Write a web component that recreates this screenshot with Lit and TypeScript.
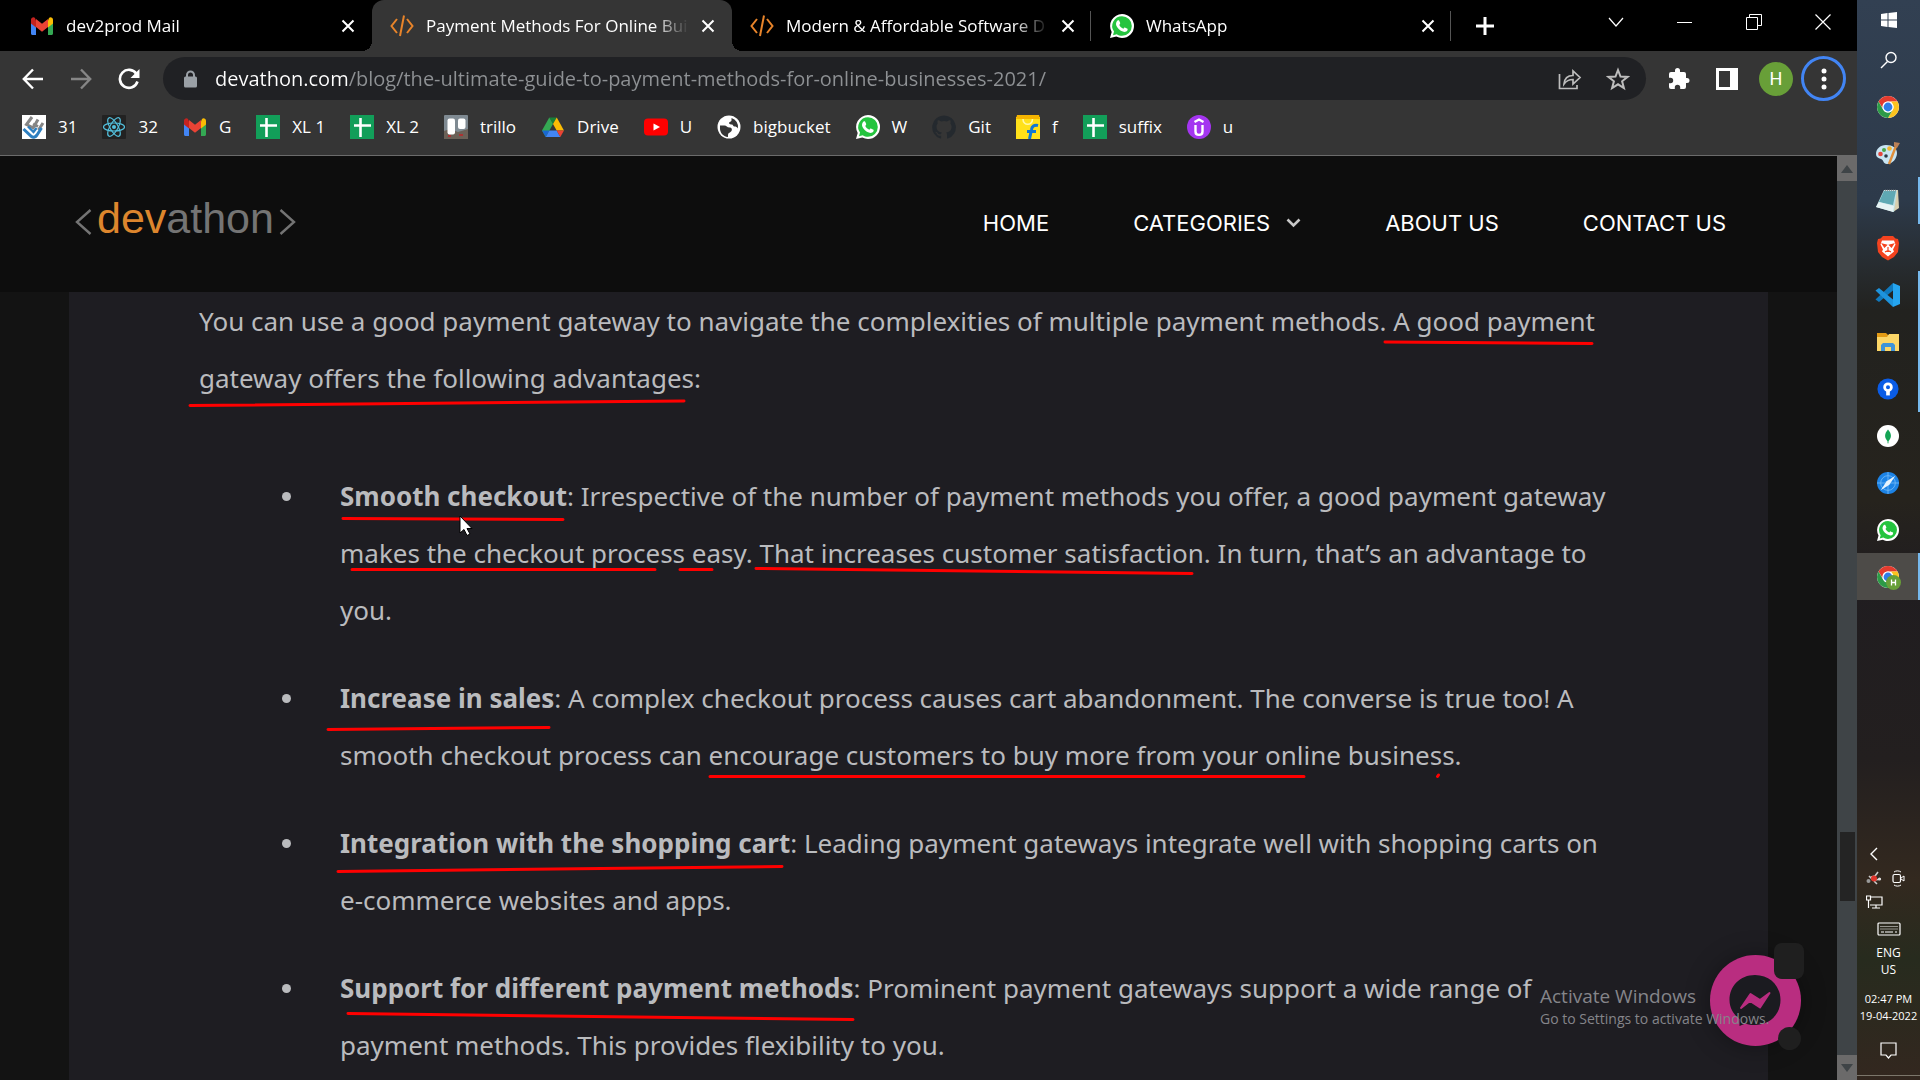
import { LitElement, html, css, svg, nothing } from "lit";
import { customElement } from "lit/decorators.js";
import { classMap } from "lit/directives/class-map.js";

const icon = (w: number, h: number, box: string, body: unknown) =>
  html`<svg width=${w} height=${h} viewBox=${box} fill="none" aria-hidden="true">${body}</svg>`;

const gmail = () =>
  icon(24, 24, "0 0 24 24", svg`
    <path d="M1 5v14.5c0 .8.6 1.5 1.500 1.500H6V11z" fill="#4285f4"/>
    <path d="M23 5v14.500c0 .8-.6 1.500-1.500 1.500H18V11z" fill="#34a853"/>
    <path d="M6 6.500v7L1 9.500V5.800C1 3.500 3.600 2.500 5 3.900z" fill="#c5221f"/>
    <path d="M18 6.500v7l5-4V5.800c0-2.300-2.600-3.300-4-1.900z" fill="#fbbc04"/>
    <path d="M6 5l6 4.800L18 5v8l-6 4.700L6 13z" fill="#ea4335"/>`);

const code = () =>
  icon(24, 24, "0 0 24 24", svg`
    <path d="M7 5L1.500 12 7 19M17 5l5.500 7L17 19M14 1.500L10 22" stroke="#e8842a" stroke-width="2"/>`);

const whatsapp = (size: number) =>
  icon(size, size, "0 0 24 24", svg`
    <path d="M12 0a12 12 0 0 1 0 24c-2 0-4-.5-5.700-1.400L0 24l1.700-6A12 12 0 0 1 12 0z" fill="#fff"/>
    <path d="M12 2.200a9.800 9.800 0 0 1 0 19.600c-2 0-3.700-.5-5.200-1.500L3 21.300l1-3.700A9.800 9.800 0 0 1 12 2.200z" fill="#25c43f"/>
    <path d="M8.200 6.200c.5 0 .8 0 1 .6l1 2.300c.1.500-.1.800-.9 1.800.8 1.700 2.200 3 4.100 3.800.7-.7 1-1.300 1.400-1.200.4.100 2 .9 2.700 1.300.3.300.1 1.400-.3 2-.8 1-2.300 1.400-3.700 1-3.800-1.100-6.600-4-7.400-6.800-.4-1.800.6-4.500 2.100-4.800z" fill="#fff"/>`);

const sheet = () =>
  icon(24, 24, "0 0 24 24", svg`
    <path d="M0 0h24v24H0z" fill="#129e59"/>
    <path d="M10.500 3v19M4 10.500h17" stroke="#fff" stroke-width="2.600"/>`);

const letterMark = () =>
  icon(24, 24, "0 0 24 24", svg`
    <path d="M0 0h24v24H0z" fill="#fff"/>
    <path d="M10 2L4.500 9.500l7 3.500M16 4.500L10.500 14M11 9l5 2.500M21 8l-4.500 7" stroke="#858585" stroke-width="3"/>
    <path d="M1.500 14l8 7.500c2 1.500 4 .5 5.500-1.500l4.500-7" stroke="#2d7fc0" stroke-width="3"/>
    <path d="M6 11.500l5.500 5.500 3-4" stroke="#2d7fc0" stroke-width="2.400"/>`);

const react = () =>
  icon(24, 24, "0 0 24 24", svg`
    <rect width="24" height="24" rx="1" fill="#222"/>
    <g stroke="#53c1de" stroke-width="1.200">
      <ellipse cx="12" cy="12" rx="10.500" ry="4"/>
      <ellipse cx="12" cy="12" rx="10.500" ry="4" transform="rotate(60 12 12)"/>
      <ellipse cx="12" cy="12" rx="10.500" ry="4" transform="rotate(120 12 12)"/>
    </g>
    <circle cx="12" cy="12" r="2" fill="#53c1de"/>`);

const trello = () =>
  icon(24, 24, "0 0 24 24", svg`
    <rect width="24" height="24" rx="1" fill="#7f8a92"/>
    <path d="M0 16l6-2 8 3 10-3v10H0z" fill="#6b6157"/>
    <path d="M4 21h3M15 20h4" stroke="#a33" stroke-width="2"/>
    <rect x="3.500" y="3.500" width="7.500" height="16" rx="2" fill="#fff"/>
    <rect x="14" y="3.500" width="7.500" height="10.500" rx="2" fill="#fff"/>`);

const drive = () =>
  icon(24, 24, "0 0 24 24", svg`
    <path d="M8.300 2.500h7.400L12 9z" fill="#188038"/>
    <path d="M8.300 2.500L12 9 4.700 22 1 15.500z" fill="#34a853"/>
    <path d="M15.700 2.500L23 15.500h-7.300L12 9z" fill="#fbbc04"/>
    <path d="M8.300 15.500h7.400L19.300 22H4.700z" fill="#4285f4"/>
    <path d="M15.700 15.500H23L19.300 22z" fill="#ea4335"/>
    <path d="M1 15.500h7.300L4.700 22z" fill="#1967d2"/>`);

const youtube = () =>
  icon(24, 24, "0 0 24 24", svg`
    <rect y="3.500" width="24" height="17" rx="4" fill="#f00"/>
    <path d="M9.500 8.500l6.500 3.500-6.500 3.500z" fill="#fff"/>`);

const globe = () =>
  icon(24, 24, "0 0 24 24", svg`
    <circle cx="12" cy="12" r="11.500" fill="#fff"/>
    <path d="M3 10.500h4.500c2 0 2.500 2 5 2s3 2.500 1.500 4-3 1.500-3 3.500V22C6 21.500 2.500 17.500 3 12zM14.500 3.500v2c0 1.500-2.500 1-2.500 2.500s2 1.500 3 1.500 1 2 2.500 2 2.500.5 3.500 2A9.500 9.500 0 0 0 14.500 3z" fill="#353535"/>`);

const github = () =>
  icon(24, 24, "0 0 24 24", svg`
    <path d="M12 .5a11.800 11.800 0 0 0-3.700 23c.6.100.8-.3.800-.6v-2.200c-3.300.7-4-1.400-4-1.400-.5-1.400-1.300-1.800-1.300-1.800-1-.7.1-.7.100-.7 1.200.1 1.800 1.200 1.800 1.200 1 1.800 2.800 1.300 3.400 1 .1-.8.4-1.300.8-1.600-2.700-.3-5.400-1.300-5.400-5.800 0-1.300.5-2.300 1.200-3.200-.1-.3-.5-1.500.1-3.100 0 0 1-.3 3.300 1.200a11 11 0 0 1 6 0c2.200-1.500 3.200-1.200 3.200-1.200.7 1.600.2 2.800.1 3.100.8.9 1.200 1.900 1.200 3.200 0 4.500-2.700 5.500-5.400 5.800.4.400.8 1.100.8 2.200v3.300c0 .3.200.7.800.6A11.800 11.800 0 0 0 12 .5z" fill="#24292e"/>`);

const flipkart = () =>
  icon(24, 24, "0 0 24 24", svg`
    <path d="M0 2h24v22H0z" fill="#ffe11a"/>
    <path d="M1 0h22l1 4H0z" fill="#f5b400"/>
    <path d="M7 4c0 7 9.500 7 9.500 0" stroke="#fff8a8" stroke-width="1.600"/>
    <path d="M22 10.500c-4-1-6 1-6.500 4L13.500 24M11 16.500h9" stroke="#0f77d4" stroke-width="3"/>`);

const udemy = () =>
  icon(24, 24, "0 0 24 24", svg`
    <circle cx="12" cy="12" r="12" fill="#a435f0"/>
    <path d="M7.500 7L12 4.500 16.500 7M8.500 10v6.500c0 4.500 7 4.500 7 0V10" stroke="#fff" stroke-width="2.400"/>`);

const chrome = (badge = false) =>
  icon(26, 26, "0 0 26 26", svg`
    <circle cx="13" cy="13" r="11" fill="#fff"/>
    <path d="M3.500 7.500a11 11 0 0 1 19 0H13a5.500 5.500 0 0 0-5.200 3.500L7.500 14z" fill="#e33b2e"/>
    <path d="M22.500 7.500A11 11 0 0 1 13 24l4.800-8.300a5.500 5.500 0 0 0 0-5.500L16 7.500z" fill="#fcc31e"/>
    <path d="M3.500 7.500A11 11 0 0 0 13 24l4.300-7.500a5.500 5.500 0 0 1-9.100-.8z" fill="#2d9a47"/>
    <circle cx="13" cy="13" r="5.500" fill="#fff"/>
    <circle cx="13" cy="13" r="4.400" fill="#2f7de9"/>
    ${badge ? svg`<circle cx="18.500" cy="18.500" r="7.500" fill="#689f38"/><path d="M16.500 15.500v6M20.500 15.500v6M16.500 18.500h4" stroke="#fff" stroke-width="1.300"/>` : nothing}`);

const cross = () => icon(14, 14, "0 0 14 14", svg`<path d="M1.500 1.500l11 11M12.500 1.500l-11 11" stroke="#fff" stroke-width="2"/>`);

const windowsLogo = () =>
  icon(18, 18, "0 0 18 18", svg`<path d="M1 3l6.500-1v6.500H1zM8.500 1.900L17 1v7.500H8.500zM1 9.500h6.500V16L1 15zM8.500 9.500H17V17l-8.500-1z" fill="#fff"/>`);

const search = () =>
  icon(18, 18, "0 0 18 18", svg`<circle cx="11" cy="6.500" r="5" stroke="#fff" stroke-width="1.400"/><path d="M7.500 10.500L1 17" stroke="#fff" stroke-width="1.400"/>`);

const paint = () =>
  icon(26, 26, "0 0 26 26", svg`
    <path d="M11 4c7 0 11 3 11 8s-4 11-10 11c-4 0-3-4-6-5s-5-2-5-5c0-5 4-9 10-9z" fill="#c8e4f2"/>
    <circle cx="5.500" cy="13" r="2.300" fill="#e4463c"/><circle cx="9" cy="9" r="2" fill="#4aa64a"/>
    <circle cx="14.500" cy="7.500" r="2.300" fill="#f2b430"/><circle cx="11" cy="15" r="1.800" fill="#2d3a48"/>
    <path d="M21 5l-7 18" stroke="#e08e3a" stroke-width="2.400"/><path d="M19 1l6 1-3 5-3-2z" fill="#b98058"/>`);

const notepad = () =>
  icon(26, 26, "0 0 26 26", svg`
    <path d="M10 2h13l1 18-6 4z" fill="#d8cfae"/><path d="M9 2h13l-3 22L1 19z" fill="#bfe2e6"/>
    <path d="M9 3h12l-3 14-14-3z" fill="#5fa9b4"/><path d="M4 14l15 4-1 6L1 19z" fill="#e6f3f4"/>
    <path d="M10 2.500h12" stroke="#999" stroke-width="1.500" stroke-dasharray="1 1"/>`);

const brave = () =>
  icon(24, 26, "0 0 24 26", svg`
    <path d="M7 1h10l2.500 2.500L22 4l1 4-1 9-4 5-6 3.500L6 22l-4-5L1 8l1-4 2.500-.5z" fill="#f4431f"/>
    <path d="M6 5.500h12l1.500 4-2.500 5 1 2-6 5-6-5 1-2-2.500-5z" fill="#fff"/>
    <path d="M6.500 9l4 1-2 2zM17.500 9l-4 1 2 2zM12 12v4M9 17l3-1.500 3 1.500" fill="#f4431f" stroke="#f4431f" stroke-width="1.200"/>`);

const vscode = () =>
  icon(26, 26, "0 0 26 26", svg`
    <path d="M18 1l7 3v18l-7 3z" fill="#25a5f0"/>
    <path d="M18 1v7.500L4 20 .5 17.500z" fill="#1079bd"/><path d="M18 25v-7.500L4 6 .5 8.500z" fill="#1e93dc"/>`);

const explorer = () =>
  icon(24, 20, "0 0 24 20", svg`
    <path d="M1 1h9l2 2h11v16H1z" fill="#e39b15"/><path d="M1 5h10l2-3h10v17H1z" fill="#fcd667"/>
    <path d="M5 19v-6l2-2h10l2 2v6h-4v-4H9v4z" fill="#3e93d8"/>`);

const sourcetree = () =>
  icon(22, 22, "0 0 24 24", svg`
    <circle cx="12" cy="12" r="11.500" fill="#0a5ce6"/>
    <circle cx="12" cy="10" r="3.700" stroke="#fff" stroke-width="3"/><path d="M12 14v5" stroke="#fff" stroke-width="4"/>`);

const mongo = () =>
  icon(22, 22, "0 0 24 24", svg`
    <circle cx="12" cy="12" r="12" fill="#fff"/><path d="M12 5c4.500 5 4 9.500 0 13-4-3.500-4.500-8 0-13z" fill="#13a454"/><path d="M12 16v4" stroke="#13a454"/>`);

const safari = () =>
  icon(22, 22, "0 0 24 24", svg`
    <circle cx="12" cy="12" r="12" fill="#1c83e6"/><circle cx="12" cy="12" r="8" stroke="#6db6f5"/>
    <path d="M12 0v24M0 12h24" stroke="#6db6f5"/><path d="M20 4l-6.500 10L4 20l6.500-10z" fill="#e8f3fd"/>`);

interface Bookmark { label: string; icon: () => unknown }
const bookmarks: Bookmark[] = [
  { label: "31", icon: letterMark },
  { label: "32", icon: react },
  { label: "G", icon: gmail },
  { label: "XL 1", icon: sheet },
  { label: "XL 2", icon: sheet },
  { label: "trillo", icon: trello },
  { label: "Drive", icon: drive },
  { label: "U", icon: youtube },
  { label: "bigbucket", icon: globe },
  { label: "W", icon: () => whatsapp(24) },
  { label: "Git", icon: github },
  { label: "f", icon: flipkart },
  { label: "suffix", icon: sheet },
  { label: "u", icon: udemy },
];

const tabs = [
  { title: "dev2prod Mail", icon: gmail, active: false, rule: false },
  { title: "Payment Methods For Online Bui", icon: code, active: true, rule: false },
  { title: "Modern & Affordable Software D", icon: code, active: false, rule: true },
  { title: "WhatsApp", icon: () => whatsapp(24), active: false, rule: true },
];

const apps = [
  { name: "Google Chrome", icon: () => chrome(), running: false, current: false },
  { name: "Paint", icon: paint, running: false, current: false },
  { name: "Notepad", icon: notepad, running: true, current: false },
  { name: "Brave", icon: brave, running: false, current: false },
  { name: "Visual Studio Code", icon: vscode, running: true, current: false },
  { name: "File Explorer", icon: explorer, running: true, current: false },
  { name: "Sourcetree", icon: sourcetree, running: true, current: false },
  { name: "MongoDB Compass", icon: mongo, running: false, current: false },
  { name: "Safari", icon: safari, running: false, current: false },
  { name: "WhatsApp", icon: () => whatsapp(22), running: false, current: false },
  { name: "Chrome, H", icon: () => chrome(true), running: true, current: true },
];

const buttonReset = css`
  * { box-sizing: border-box; }
  button { border: 0; padding: 0; margin: 0; background: none; color: inherit; font: inherit; display: flex; align-items: center; justify-content: center; }
  a { color: inherit; text-decoration: none; }
  svg { display: block; flex: none; }
`;

@customElement("browser-chrome")
class BrowserChrome extends LitElement {
  static styles = [buttonReset, css`
    :host { display: block; background: #353535; color: #fff; font-family: "Open Sans", "Noto Sans", sans-serif; font-size: 17px; border-bottom: 1px solid #6b6b6b; }
    .strip { display: flex; height: 51px; background: #000; padding-left: 12px; }
    .tab { flex: 0 1 360px; display: flex; align-items: center; min-width: 0; padding: 0 17px 0 18px; position: relative; }
    .tab.active { background: #353535; border-radius: 12px 12px 0 0; }
    .tab.active::before, .tab.active::after { content: ""; position: absolute; bottom: 0; width: 10px; height: 10px; }
    .tab.active::before { left: -10px; background: radial-gradient(circle at 0 0, transparent 10px, #353535 10px); }
    .tab.active::after { right: -10px; background: radial-gradient(circle at 100% 0, transparent 10px, #353535 10px); }
    .tab.rule::after { content: ""; position: absolute; right: 1px; top: 11px; width: 1px; height: 30px; background: #555; }
    .pick { flex: 1; min-width: 0; justify-content: flex-start; gap: 12px; }
    .title { flex: 1; text-align: left; white-space: nowrap; overflow: hidden; mask-image: linear-gradient(90deg, #000 calc(100% - 36px), transparent); margin-right: 12px; }
    .plus { width: 66px; }
    .window { margin-left: auto; display: flex; padding-bottom: 8px; }
    .window button { width: 69px; }
    .bar { display: flex; align-items: center; height: 55px; padding: 0 11px 0 9px; }
    .nav { width: 48px; height: 44px; }
    .omnibox { flex: 1; display: flex; align-items: center; height: 43px; border-radius: 22px; background: #202124; margin: 0 9px 0 10px; padding: 0 4px 0 20px; gap: 17px; }
    .url { flex: 1; min-width: 0; border: 0; outline: 0; padding: 0; font: inherit; font-size: 20px; height: 40px; color: transparent; background: linear-gradient(90deg, #fff 133px, #8e9194 133px); background-clip: text; -webkit-background-clip: text; }
    .inner { display: flex; }
    .inner button, .tool { width: 48px; height: 43px; }
    .avatar { width: 34px; height: 34px; border-radius: 50%; background: #689f38; font-family: Roboto, sans-serif; font-size: 18px; margin: 0 8px; }
    .menu { width: 45px; height: 45px; border-radius: 50%; border: 3px solid #4285f4; }
    .marks { display: flex; gap: 25px; height: 49px; align-items: center; padding: 0 22px 8px; list-style: none; margin: 0; }
    .mark { display: flex; align-items: center; gap: 12px; white-space: nowrap; }
  `];

  render() {
    return html`
      <div class="strip">
        ${tabs.map((t) => html`
          <div class=${classMap({ tab: true, active: t.active, rule: t.rule })}>
            <button class="pick">${t.icon()}<span class="title">${t.title}</span></button>
            <button aria-label="Close tab">${cross()}</button>
          </div>`)}
        <button class="plus" aria-label="New tab">${icon(18, 18, "0 0 18 18", svg`<path d="M9 0v18M0 9h18" stroke="#fff" stroke-width="3"/>`)}</button>
        <div class="window">
          <button aria-label="Search tabs">${icon(16, 16, "0 0 16 16", svg`<path d="M1 4l7 8 7-8" stroke="#fff" stroke-width="1.200"/>`)}</button>
          <button aria-label="Minimize">${icon(16, 16, "0 0 16 16", svg`<path d="M0 8.500h15" stroke="#fff"/>`)}</button>
          <button aria-label="Restore">${icon(16, 16, "0 0 16 16", svg`<path d="M.5 3.500h11v12H.5zM3.500 3V.5h12v11H12" stroke="#fff"/>`)}</button>
          <button aria-label="Close window">${icon(16, 16, "0 0 16 16", svg`<path d="M.5.5l15 15M15.500.5l-15 15" stroke="#fff" stroke-width="1.200"/>`)}</button>
        </div>
      </div>
      <div class="bar">
        <button class="nav" aria-label="Back">${icon(22, 22, "0 0 22 22", svg`<path d="M21 11H2M11 1.500L1.800 11l9.200 9.500" stroke="#fff" stroke-width="2.400"/>`)}</button>
        <button class="nav" aria-label="Forward">${icon(22, 22, "0 0 22 22", svg`<path d="M1 11h19M11 1.500l9.200 9.500-9.200 9.500" stroke="#868686" stroke-width="2.400"/>`)}</button>
        <button class="nav" aria-label="Reload">${icon(22, 22, "0 0 22 22", svg`<path d="M18.500 6A9 9 0 1 0 19.500 13.500" stroke="#fff" stroke-width="2.600"/><path d="M21.500 1v9h-9z" fill="#fff"/>`)}</button>
        <div class="omnibox">
          ${icon(15, 18, "0 0 15 18", svg`<path d="M4 8V5a3.500 3.500 0 0 1 7 0v3" stroke="#9aa0a6" stroke-width="2"/><rect x="1" y="6.500" width="13" height="11" rx="1.500" fill="#9aa0a6"/>`)}
          <input class="url" aria-label="Address" value="devathon.com/blog/the-ultimate-guide-to-payment-methods-for-online-businesses-2021/" />
          <div class="inner">
            <button aria-label="Share">${icon(24, 24, "0 0 24 24", svg`<path d="M1.500 7v14.500H19V18M6 17c.5-6 3.500-8.500 9-8.500V4l7 6.500-7 6.500v-4.500c-4 0-6.500 1-9 4.500z" stroke="#bdbdbd" stroke-width="1.700"/>`)}</button>
            <button aria-label="Bookmark">${icon(24, 24, "0 0 24 24", svg`<path d="M12 3l2.500 6.500 7 .4-5.400 4.400 1.800 6.700-5.900-3.700L6.100 21l1.800-6.700L2.500 9.900l7-.4z" stroke="#bdbdbd" stroke-width="2"/>`)}</button>
          </div>
        </div>
        <button class="tool" aria-label="Extensions">${icon(24, 24, "0 0 24 24", svg`<path d="M20 11h-1V7a2 2 0 0 0-2-2h-4V3.500a2.500 2.500 0 0 0-5 0V5H4a2 2 0 0 0-2 2v3.800h1.500a2.700 2.700 0 0 1 0 5.400H2V20a2 2 0 0 0 2 2h3.800v-1.500a2.700 2.700 0 0 1 5.400 0V22H17a2 2 0 0 0 2-2v-4h1a2.500 2.500 0 0 0 0-5z" fill="#fff"/>`)}</button>
        <button class="tool" aria-label="Side panel">${icon(22, 22, "0 0 22 22", svg`<path d="M0 0h22v22H0zM3 3v16h11V3z" fill="#fff" fill-rule="evenodd"/>`)}</button>
        <button class="avatar">H</button>
        <button class="menu" aria-label="Menu">${icon(6, 22, "0 0 6 22", svg`<g fill="#fff"><circle cx="3" cy="3" r="2.500"/><circle cx="3" cy="11" r="2.500"/><circle cx="3" cy="19" r="2.500"/></g>`)}</button>
      </div>
      <ul class="marks">
        ${bookmarks.map((b) => html`<li><a class="mark" href="#">${b.icon()}<span>${b.label}</span></a></li>`)}
      </ul>`;
  }
}

@customElement("article-page")
class ArticlePage extends LitElement {
  static styles = [buttonReset, css`
    :host { display: flex; position: relative; flex: 1; min-height: 0; overflow: hidden; background: #131313; }
    .page { flex: 1; min-width: 0; }
    .head { display: flex; align-items: center; height: 136px; background: #0d0d0d; padding: 0 111px 2px 75px; color: #fff; }
    .logo { display: flex; align-items: center; gap: 5px; font-family: "Liberation Sans", Arial, sans-serif; font-size: 43px; line-height: 48px; color: #747474; padding-bottom: 10px; }
    .logo svg { margin-top: 8px; }
    .dev { color: #dd862d; }
    .links { margin-left: auto; display: flex; gap: 84px; font-family: Inter, sans-serif; font-size: 22px; }
    .links a { display: flex; align-items: center; gap: 16px; }
    .sheet { margin: 0 69px; background: #1e1d22; padding: 1px 148px 0 130px; height: 100%; color: #babbbe; font-family: "Noto Sans", "Open Sans", sans-serif; font-size: 26px; line-height: 57px; }
    p { margin: 0 0 61px; }
    ul { margin: 0; padding: 0 0 0 141px; list-style: none; }
    li { position: relative; margin-bottom: 31px; }
    li::before { content: ""; position: absolute; left: -58px; top: 24px; width: 9px; height: 9px; border-radius: 50%; background: #babbbe; }
    .scroll { width: 20px; background: #3f4447; display: flex; flex-direction: column; }
    .scroll button { height: 25px; background: #6b6a6a; flex: none; }
    .track { flex: 1; display: grid; grid-template-rows: 653fr 69px 154fr; padding: 0 2px 0 3px; }
    .thumb { grid-row: 2; background: #242424; }
    .ink { position: absolute; left: 0; top: 0; pointer-events: none; }
    .chat { position: absolute; right: 53px; bottom: 22px; overflow: visible; }
    .disc { filter: drop-shadow(0 1px 12px rgba(0, 0, 0, 0.35)); }
    .activate { position: absolute; right: 81px; bottom: 51px; width: 236px; color: #85858a; font-family: "Open Sans", sans-serif; font-size: 14px; line-height: 20px; white-space: nowrap; }
    .activate strong { display: block; font-weight: 400; font-size: 19px; line-height: 26px; }
  `];

  render() {
    return html`
      <div class="page">
        <header class="head">
          <a class="logo" href="#">
            ${icon(17, 28, "0 0 17 28", svg`<path d="M15.500 2L2 14l13.500 12" stroke="#747474" stroke-width="2.400"/>`)}
            <span><span class="dev">dev</span>athon</span>
            ${icon(17, 28, "0 0 17 28", svg`<path d="M1.500 2L15 14 1.500 26" stroke="#747474" stroke-width="2.400"/>`)}
          </a>
          <nav class="links">
            <a href="#">HOME</a>
            <a href="#">CATEGORIES ${icon(15, 12, "0 0 15 12", svg`<path d="M1.500 2.500l6 6 6-6" stroke="#c8c8c8" stroke-width="2.600"/>`)}</a>
            <a href="#">ABOUT US</a>
            <a href="#">CONTACT US</a>
          </nav>
        </header>
        <main class="sheet">
          <p>You can use a good payment gateway to navigate the complexities of multiple payment methods. A good payment gateway offers the following advantages:</p>
          <ul>
            <li><b>Smooth checkout</b>: Irrespective of the number of payment methods you offer, a good payment gateway makes the checkout process easy. That increases customer satisfaction. In turn, that’s an advantage to you.</li>
            <li><b>Increase in sales</b>: A complex checkout process causes cart abandonment. The converse is true too! A smooth checkout process can encourage customers to buy more from your online business.</li>
            <li><b>Integration with the shopping cart</b>: Leading payment gateways integrate well with shopping carts on e-commerce websites and apps.</li>
            <li><b>Support for different payment methods</b>: Prominent payment gateways support a wide range of payment methods. This provides flexibility to you.</li>
          </ul>
        </main>
      </div>
      <div class="scroll">
        <button aria-label="Scroll up">${icon(12, 8, "0 0 12 8", svg`<path d="M6 0l6 8H0z" fill="#3f4447"/>`)}</button>
        <div class="track"><div class="thumb"></div></div>
        <button aria-label="Scroll down">${icon(12, 8, "0 0 12 8", svg`<path d="M6 8L0 0h12z" fill="#3f4447"/>`)}</button>
      </div>
      <svg class="ink" width="1837" height="924" viewBox="0 156 1837 924" fill="none" aria-hidden="true">
        <g stroke="#f00" stroke-width="3" stroke-linecap="round">
          <path d="M1385 342L1592 343.500M190 405.500L684 401M343 518.500L563 519.500M352 569.500H655M680 569.500H712M756 568.500L1192 573.500"/>
          <path d="M328 729.500L549 727.500M710 776.500H1304M1437.500 776.500l1-1.500M338 871.500L782 866.500M348 1013.500L853 1019.500"/>
        </g>
        <path d="M460 516v17l4-3.500 3 6 3-1.500-3-5.500h5z" fill="#fff" stroke="#000"/>
      </svg>
      <svg class="chat" width="94" height="140" viewBox="-2 0 94 140" fill="none" aria-hidden="true">
        <circle class="disc" cx="43.500" cy="82.500" r="45.500" fill="#b92d80"/>
        <path d="M43 57c15 0 25.500 11 25.500 25S58 107 43 107c-4 0-6.500-.5-9.500-1.500l-6 2.500v-7c-6-4.500-10-11-10-19 0-14 10.500-25 25.500-25z" fill="#1b1b20"/>
        <path d="M29 90l9.500-14 9.500 6 9.500-7-9.500 14.500-10-6.500z" fill="#b92d80" stroke="#b92d80" stroke-width="2" stroke-linejoin="round"/>
        <rect x="62" y="25" width="30" height="36" rx="8" fill="#1f1f1f"/>
        <circle cx="77.500" cy="120.500" r="11.500" fill="#1f1f1f"/>
      </svg>
      <div class="activate"><strong>Activate Windows</strong>Go to Settings to activate Windows.</div>`;
  }
}

@customElement("task-bar")
class TaskBar extends LitElement {
  static styles = [buttonReset, css`
    :host { display: flex; flex-direction: column; width: 63px; flex: none; padding-bottom: 4px; color: #fff; font-family: "Open Sans", sans-serif; font-size: 12px; background: linear-gradient(180deg, #324052 0, #2d3a4a 200px, #272c30 265px, #22221f 310px, #26231d 500px, #201d20 580px, #231f1f 760px, #33291f 880px, #272b1e 960px, #33271f 1080px); }
    .start { height: 39px; }
    .find { height: 42px; margin-bottom: 2px; }
    .app { width: 100%; height: 47px; padding-right: 2px; }
    .app.running { box-shadow: inset -2px 0 0 #76b9ed; }
    .app.current { background-color: #4d4b48; }
    .tray { margin-top: auto; display: flex; flex-direction: column; align-items: center; }
    .row { display: grid; grid-template-columns: 24px 24px; height: 24px; width: 100%; padding-left: 5px; }
    .keys { height: 30px; }
    .lang { line-height: 17px; text-align: center; flex-direction: column; height: 34px; }
    .clock { line-height: 17px; flex-direction: column; font-size: 11px; margin-top: 12px; height: 34px; white-space: nowrap; }
    .note { height: 32px; margin: 10px 0 9px; }
    .edge { height: 1px; background: #7c766b; }
  `];

  render() {
    return html`
      <button class="start" aria-label="Start">${windowsLogo()}</button>
      <button class="find" aria-label="Search">${search()}</button>
      ${apps.map((a) => html`<button class=${classMap({ app: true, running: a.running, current: a.current })} aria-label=${a.name}>${a.icon()}</button>`)}
      <div class="tray">
        <div class="row"><button aria-label="Show hidden icons">${icon(8, 14, "0 0 8 14", svg`<path d="M7 1L1 7l6 6" stroke="#fff" stroke-width="1.400"/>`)}</button></div>
        <div class="row">
          <button aria-label="Tray app">${icon(16, 14, "0 0 16 14", svg`<path d="M5 6l4-1 3-4M9 9l6-1M3 5l4 4M8 10l3 3" stroke="#ccc" stroke-width="1.600"/><circle cx="8" cy="7.500" r="3" fill="#e0352b"/><circle cx="2.500" cy="10" r="2" fill="#999"/><circle cx="13.500" cy="8" r="1.500" fill="#ddd"/>`)}</button>
          <button aria-label="Meet now">${icon(13, 17, "0 0 13 17", svg`<rect x="1" y="4.500" width="7.500" height="8" rx="1.500" stroke="#fff" stroke-width="1.200"/><path d="M9 8l3-2v5L9 9M2 2c2-1.500 5-1.500 7 0M2 15c2 1.500 5 1.500 7 0" stroke="#fff"/>`)}</button>
        </div>
        <div class="row"><button aria-label="Network">${icon(17, 14, "0 0 17 14", svg`<path d="M5 2h11v8H4M10 10v3M6 13h8M.5 1h4v4h-4zM2.500 5v8" stroke="#fff" stroke-width="1.200"/>`)}</button></div>
        <button class="keys" aria-label="Touch keyboard">${icon(24, 14, "0 0 24 14", svg`<rect x="1" y="1" width="22" height="12" rx="1" stroke="#fff" stroke-width="1.200"/><path d="M3.500 4.500h17M3.500 7h17" stroke="#fff" stroke-dasharray="1 1"/><path d="M4 10h3M8 10h8M18 10h2" stroke="#fff"/>`)}</button>
        <button class="lang"><span>ENG</span><span>US</span></button>
        <button class="clock"><span>02:47 PM</span><span>19-04-2022</span></button>
        <button class="note" aria-label="Notifications">${icon(17, 17, "0 0 17 17", svg`<path d="M1 1h15v12h-5l-2.500 3L6 13H1z" stroke="#fff" stroke-width="1.200"/>`)}</button>
      </div>
      <div class="edge"></div>`;
  }
}

@customElement("app-root")
class AppRoot extends LitElement {
  static styles = css`
    :host { display: flex; height: 100vh; overflow: hidden; background: #000; }
    .browser { flex: 1; min-width: 0; display: flex; flex-direction: column; }
  `;

  render() {
    return html`
      <div class="browser"><browser-chrome></browser-chrome><article-page></article-page></div>
      <task-bar></task-bar>`;
  }
}
